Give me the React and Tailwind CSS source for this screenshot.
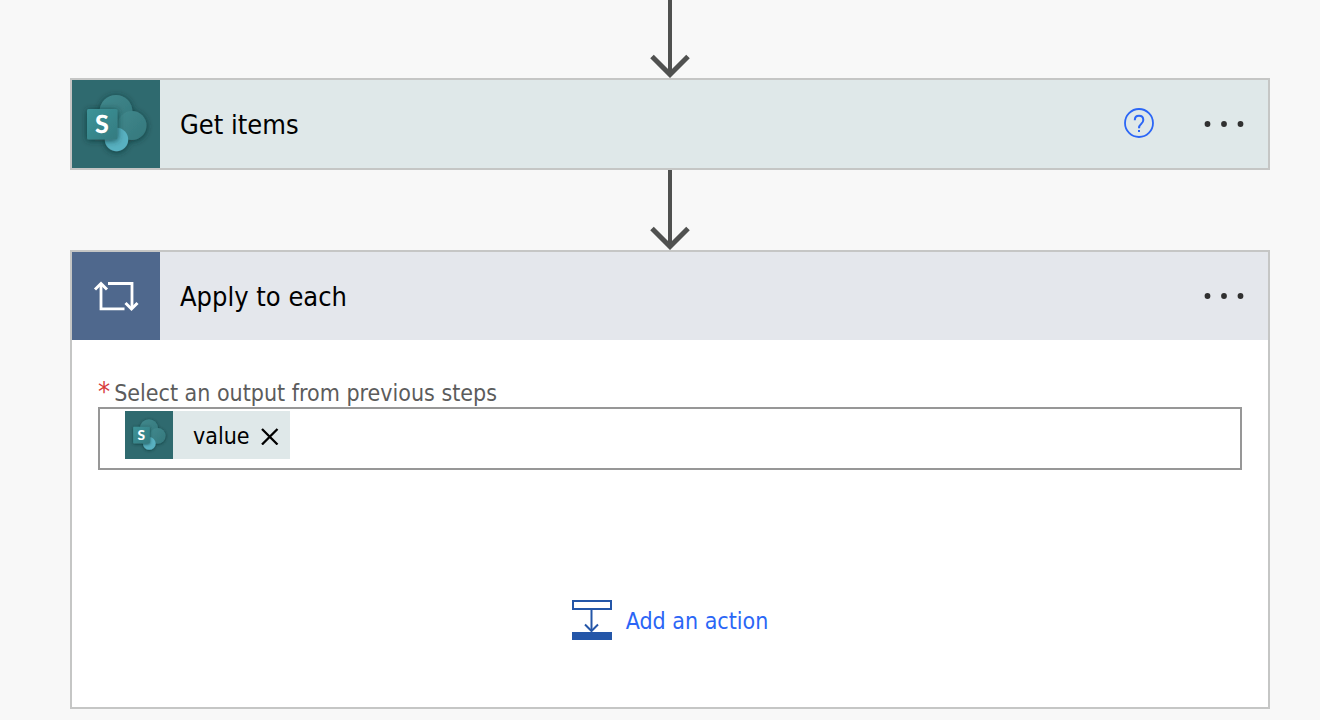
import { useId } from "react";

function SharePointIcon({ className }) {
  const id = useId();
  const top = `${id}-top`;
  const tile = `${id}-tile`;
  const shade = `${id}-shade`;
  return (
    <svg viewBox="0 0 88 88" className={className} aria-hidden="true">
      <defs>
        <linearGradient id={top} x1="0" y1="0" x2="1" y2="1">
          <stop offset="0" stopColor="#41898d" />
          <stop offset="1" stopColor="#34777c" />
        </linearGradient>
        <linearGradient id={tile} x1="0" y1="0" x2="1" y2="1">
          <stop offset="0" stopColor="#3d9499" />
          <stop offset="1" stopColor="#347b80" />
        </linearGradient>
        <filter id={shade} x="-40%" y="-40%" width="180%" height="180%">
          <feDropShadow dx="0" dy="1" stdDeviation="3" floodColor="#0b2f33" floodOpacity="0.8" />
        </filter>
      </defs>
      <rect width="88" height="88" fill="#2f6a6f" />
      <g filter={`url(#${shade})`}>
        <circle cx="44" cy="31.500" r="16.500" fill={`url(#${top})`} />
        <circle cx="60" cy="45.500" r="14.500" fill={`url(#${top})`} />
        <circle cx="44.500" cy="59.500" r="11.700" fill="#58b1c1" />
      </g>
      <g filter={`url(#${shade})`}>
        <rect x="15" y="29" width="30.500" height="30.500" rx="1.500" fill={`url(#${tile})`} />
      </g>
      <text x="30" y="52.500" textAnchor="middle" fill="#fff" fontSize="25" fontWeight="900" fontFamily="Lato, sans-serif" textRendering="geometricPrecision">
        S
      </text>
    </svg>
  );
}

function LoopIcon() {
  return (
    <svg viewBox="0 0 88 88" className="size-22 shrink-0 bg-[#4f688d]" fill="none" stroke="#fff" strokeWidth="2.800" aria-hidden="true">
      <path d="M52.500 56.800H29V32" />
      <path d="M23 37.500 29 31.500 35 37.500" strokeWidth="3" />
      <path d="M36 31.500H60V56" />
      <path d="M53.500 51 59.500 57 65.500 51" strokeWidth="3" />
    </svg>
  );
}

function Connector({ className }) {
  return (
    <div className={`flex justify-center ${className}`}>
      <svg viewBox="0 0 40 80" className="h-20 w-10" fill="none" stroke="#505150" strokeWidth="4" aria-hidden="true">
        <path d="M20 0V76" />
        <path d="M2 58.500 20 76.500 38 58.500" strokeWidth="5" />
      </svg>
    </div>
  );
}

function MoreButton() {
  return (
    <button type="button" aria-label="More commands" className="flex h-10 w-12 items-center justify-center">
      <svg viewBox="0 0 48 12" className="h-3 w-12" fill="#303030" aria-hidden="true">
        <circle cx="7.500" cy="6" r="2.900" />
        <circle cx="24" cy="6" r="2.900" />
        <circle cx="40.500" cy="6" r="2.900" />
      </svg>
    </button>
  );
}

export default function App() {
  return (
    <main className="min-h-screen overflow-hidden bg-[#f8f8f8] pr-[50px] pb-[11px] pl-[70px] font-['DejaVu_Sans_Condensed','Noto_Sans',sans-serif] text-black">
      <Connector className="-mt-0.5" />

      <section className="flex items-center border-2 border-[#c5c6c5] bg-[#dfe8e9] pr-5">
        <SharePointIcon className="size-22 shrink-0" />
        <h2 className="flex-1 pt-0.5 pl-5 text-[27px] leading-9">Get items</h2>
        <button type="button" aria-label="Help" className="mr-[45px] size-8">
          <svg viewBox="0 0 32 32" className="size-8" fill="none" stroke="#2b66f6" strokeWidth="2" aria-hidden="true">
            <circle cx="16" cy="15" r="14" strokeWidth="1.800" />
            <path d="M11.800 12.200C11.800 9.500 13.300 7.800 16 7.800s4.300 1.700 4.300 4.200c0 2-1 3-2.200 4.100C16.800 17.200 16 18 16 20.200" />
            <path d="M15 23h2" />
          </svg>
        </button>
        <MoreButton />
      </section>

      <Connector className="" />

      <section className="border-2 border-[#c5c6c5] bg-white">
        <header className="flex items-center bg-[#e4e7ec] pr-5">
          <LoopIcon />
          <h2 className="flex-1 pt-0.5 pl-5 text-[27px] leading-9">Apply to each</h2>
          <MoreButton />
        </header>
        <div className="px-[26px] pt-10 pb-[67px]">
          <label htmlFor="output" className="flex gap-1 text-[23px] leading-[27px] text-[#5c5c5c]">
            <span className="text-[27px] leading-6 text-[#d83b3b]">*</span>
            Select an output from previous steps
          </label>
          <div className="flex h-[63px] items-start border-2 border-[#979797] pt-0.5 pl-[25px]">
            <span className="flex h-12 items-center bg-[#dfe8e9] pr-2.5 text-[23px]">
              <SharePointIcon className="size-12 shrink-0" />
              <span className="pt-0.5 pl-5">value</span>
              <button type="button" aria-label="Remove value" className="ml-2.5">
                <svg viewBox="0 0 20 20" className="size-5" fill="none" stroke="#000" strokeWidth="2.300" aria-hidden="true">
                  <path d="M2 4 17.500 19.500M17.500 4 2 19.500" />
                </svg>
              </button>
            </span>
            <input id="output" type="text" className="h-12 min-w-0 flex-1 px-2 text-[23px] outline-none" />
          </div>
          <div className="mt-[130px] flex justify-center">
            <button type="button" className="flex items-center gap-3.5 text-[23px] text-[#2b66f6]">
              <svg viewBox="0 0 40 40" className="size-10" fill="none" stroke="#2456a8" strokeWidth="2" aria-hidden="true">
                <rect x="1" y="1" width="38" height="8" />
                <path d="M19.500 9V30" />
                <path d="M13 24.500 19.500 31 26 24.500" />
                <rect y="32" width="40" height="8" fill="#2456a8" stroke="none" />
              </svg>
              <span className="pt-0.5">Add an action</span>
            </button>
          </div>
        </div>
      </section>
    </main>
  );
}
